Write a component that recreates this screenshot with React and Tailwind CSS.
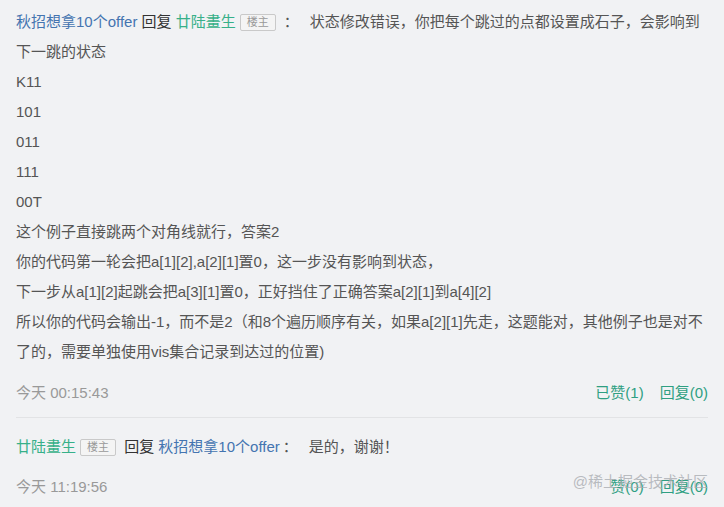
import React from 'react';

const font = { fontFamily: '"Liberation Sans", "Noto Sans CJK SC", sans-serif' };

const Badge = () => (
  <span className="inline-block align-middle mx-1 px-[6px] leading-[15px] text-[11px] text-[#999] bg-[#f4f4f4] border border-[#c9c9c9] rounded-[2px] relative -top-px">
    楼主
  </span>
);

const Footer = ({ time, liked, likes, replies }) => (
  <div className="flex items-center justify-between leading-[30px] text-[#999]">
    <span>{time}</span>
    <div className="flex gap-4 text-[#2f9f82]">
      <span>{liked ? `已赞(${likes})` : `赞(${likes})`}</span>
      <span>回复({replies})</span>
    </div>
  </div>
);

const lines = [
  'K11',
  '101',
  '011',
  '111',
  '00T',
  '这个例子直接跳两个对角线就行，答案2',
  '你的代码第一轮会把a[1][2],a[2][1]置0，这一步没有影响到状态，',
  '下一步从a[1][2]起跳会把a[3][1]置0，正好挡住了正确答案a[2][1]到a[4][2]',
];

export default function App() {
  return (
    <div className="relative w-[724px] h-[507px] overflow-hidden bg-[#f1f2f4] text-[15px] text-[#555] px-4 pt-[7px]" style={font}>
      <div className="leading-[30px]">
        <div>
          <span className="text-[#4474b0]">秋招想拿10个offer</span>
          <span className="text-[#333]"> 回复 </span>
          <span className="text-[#36b089]">廿陆畫生</span>
          <Badge />
          <span className="text-[#555] ml-[4px]">：</span>
          <span className="ml-[11px]">状态修改错误，你把每个跳过的点都设置成石子，会影响到下一跳的状态</span>
        </div>
        {lines.map((l) => (
          <div key={l}>{l}</div>
        ))}
        <div>所以你的代码会输出-1，而不是2（和8个遍历顺序有关，如果a[2][1]先走，这题能对，其他例子也是对不了的，需要单独使用vis集合记录到达过的位置)</div>
      </div>

      <div className="mt-[11px]">
        <Footer time="今天 00:15:43" liked likes={1} replies={0} />
      </div>

      <div className="mt-[9px] border-t border-[#e2e3e5] pt-[14px] leading-[30px]">
        <div>
          <span className="text-[#36b089]">廿陆畫生</span>
          <Badge />
          <span className="text-[#333]"> 回复 </span>
          <span className="text-[#4474b0]">秋招想拿10个offer</span>
          <span className="text-[#555] ml-[3px]">：</span>
          <span className="ml-[11px]">是的，谢谢！</span>
        </div>
        <div className="mt-[10px]">
          <Footer time="今天 11:19:56" likes={0} replies={0} />
        </div>
      </div>

      <div className="absolute right-4 top-[471px] text-[15px] leading-[22px] text-[#a9acb1]/80 pointer-events-none">
        @稀土掘金技术社区
      </div>
    </div>
  );
}
